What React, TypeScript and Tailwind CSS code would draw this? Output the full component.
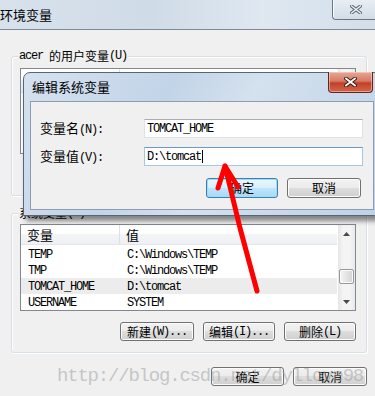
import React from "react";

const MONO = "font-['Liberation_Mono',monospace] text-[12px] tracking-[-1.2px]";

function Mono({ children }: { children: React.ReactNode }) {
  return <span className={MONO}>{children}</span>;
}

function Btn({
  className,
  children,
  focused,
}: {
  className: string;
  children: React.ReactNode;
  focused?: boolean;
}) {
  return (
    <div
      className={`${className} flex items-center justify-center rounded-[3px] border leading-[14px] ${
        focused
          ? "border-[#3c7fb1] bg-[linear-gradient(#eaf6fd_0%,#d9f0fc_50%,#bee6fd_50%,#a7d9f5_100%)] shadow-[inset_0_0_0_1px_#9fdcf8]"
          : "border-[#707070] bg-[linear-gradient(#f2f2f2_0%,#ebebeb_50%,#dddddd_50%,#cfcfcf_100%)] shadow-[inset_0_0_0_1px_#fcfcfc]"
      }`}
    >
      {children}
    </div>
  );
}

function Tri({ up }: { up?: boolean }) {
  return (
    <svg width="7" height="4" viewBox="0 0 7 4">
      {up ? <path d="M3.5 0 L7 4 L0 4 Z" fill="#4a4a4a" /> : <path d="M0 0 L7 0 L3.5 4 Z" fill="#4a4a4a" />}
    </svg>
  );
}

function Scrollbar() {
  return (
    <div className="w-[17px] flex flex-col bg-[linear-gradient(90deg,#e6e6e6,#f4f4f4_30%,#f4f4f4_70%,#e9e9e9)]">
      <div className="h-[17px] flex items-center justify-center">
        <Tri up />
      </div>
      <div className="flex-1 flex flex-col pt-[27px]">
        <div className="mx-[1px] h-[15px] rounded-[2px] border border-[#979797] bg-[linear-gradient(90deg,#f6f6f6,#e4e4e4_50%,#d3d3d3)] shadow-[inset_0_0_0_1px_#fafafa]" />
      </div>
      <div className="h-[17px] flex items-center justify-center">
        <Tri />
      </div>
    </div>
  );
}

type Row = { name: string; value: string; hl?: boolean };

function ListView({ rows, height, headers }: { rows: Row[]; height: string; headers?: boolean }) {
  return (
    <div className={`${height} flex border border-[#828790] bg-white overflow-hidden`}>
      <div className="flex-1 flex flex-col min-w-0 pr-[1px]">
        <div className="h-[24px] flex border-b border-[#e2e5e9] bg-[linear-gradient(#ffffff_0%,#ffffff_50%,#f3f4f6_50%,#eef0f3_100%)]">
          <div className="w-[99px] pl-[6px] flex items-center border-r border-[#dde1e6] text-[13px]">
            {headers ? "变量" : null}
          </div>
          <div className="pl-[6px] flex items-center text-[13px]">{headers ? "值" : null}</div>
        </div>
        <div className="pt-[1px] flex flex-col">
          {rows.map((r) => (
            <div key={r.name} className={`h-[16px] flex items-center ${r.hl ? "bg-[#ececec]" : ""}`}>
              <div className="w-[99px] pl-[7px]">
                <Mono>{r.name}</Mono>
              </div>
              <div className="pl-[7px]">
                <Mono>{r.value}</Mono>
              </div>
            </div>
          ))}
        </div>
      </div>
      <Scrollbar />
    </div>
  );
}

function Group({
  label,
  className,
  children,
}: {
  label: React.ReactNode;
  className: string;
  children: React.ReactNode;
}) {
  return (
    <div
      className={`relative rounded-[3px] border border-[#d5dfe5] shadow-[inset_1px_1px_0_#ffffff,1px_1px_0_#ffffff] ${className}`}
    >
      <div className="absolute left-[6px] top-[-9px] px-[1px] bg-[#f0f0f0] leading-[16px] flex items-center">
        {label}
      </div>
      {children}
    </div>
  );
}

export default function App() {
  return (
    <div className="relative w-[375px] h-[396px] overflow-hidden bg-[#f0f0f0] font-['Noto_Sans_CJK_SC',sans-serif] text-[12px] leading-[16px] text-black">
      {/* Title bar */}
      <div className="h-[30px] flex items-start border-b border-[#7d8a98] bg-[linear-gradient(90deg,#d8e2ec,#cfdbe7_40%,#dfe8f1_70%,#d3dee9)]">
        <div className="h-[29px] flex items-center text-[13px]">环境变量</div>
        <div className="ml-auto -mr-[3px] w-[46px] h-[20px] rounded-bl-[4px] border-l border-b border-[#6b7684] bg-[linear-gradient(#e8eef4,#d3dce6)] shadow-[inset_1px_0_0_#f7fafc] flex items-center justify-center">
          <svg width="12" height="9" viewBox="0 0 12 9">
            <path d="M1.5 1 L10.5 8 M10.5 1 L1.5 8" stroke="#5d6875" strokeWidth="3.4" strokeLinecap="square" />
            <path d="M1.5 1 L10.5 8 M10.5 1 L1.5 8" stroke="#eef2f6" strokeWidth="1.4" strokeLinecap="square" />
          </svg>
        </div>
      </div>

      {/* Body */}
      <div className="flex flex-col pl-[11px] pr-[8px] pt-[26px]">
        <Group
          className="h-[140px] pt-[11px] pl-[8px] pr-[10px]"
          label={
            <>
              <Mono>acer</Mono>
              <span className="ml-[6px]">的用户变量</span>
              <Mono>(U)</Mono>
            </>
          }
        >
          <ListView height="h-[86px]" rows={[]} />
        </Group>

        <Group
          className="mt-[17px] h-[140px] pt-[10px] pl-[8px] pr-[10px] flex flex-col"
          label={
            <>
              <span>系统变量</span>
              <Mono>(S)</Mono>
            </>
          }
        >
          <ListView
            headers
            height="h-[87px]"
            rows={[
              { name: "TEMP", value: "C:\\Windows\\TEMP" },
              { name: "TMP", value: "C:\\Windows\\TEMP" },
              { name: "TOMCAT_HOME", value: "D:\\tomcat", hl: true },
              { name: "USERNAME", value: "SYSTEM" },
            ]}
          />
          <div className="mt-[11px] flex justify-end gap-[9px]">
            <Btn className="w-[74px] h-[19px]">
              新建<Mono>(W)...</Mono>
            </Btn>
            <Btn className="w-[72px] h-[19px]">
              编辑<Mono>(I)...</Mono>
            </Btn>
            <Btn className="w-[72px] h-[19px]">
              删除<Mono>(L)</Mono>
            </Btn>
          </div>
        </Group>

        <div className="mt-[14px] flex justify-end gap-[9px]">
          <Btn className="w-[73px] h-[19px]">确定</Btn>
          <Btn className="w-[74px] h-[19px]">取消</Btn>
        </div>
      </div>

      {/* Edit dialog */}
      <div className="absolute left-[23px] top-[72px] w-[358px] h-[144px] rounded-t-[7px] border border-[#55657a] bg-[linear-gradient(120deg,#d5e2ef_0%,#c2d4e8_35%,#d4e1ee_55%,#bed1e6_100%)] px-[6px] pb-[5px] flex flex-col shadow-[3px_5px_5px_rgba(0,0,0,0.45)]">
        <div className="h-[28px] flex items-start">
          <div className="h-[28px] flex items-center pl-[2px] text-[13px]">编辑系统变量</div>
          <div className="ml-auto -mt-px mr-[1px] w-[45px] h-[21px] rounded-b-[4px] border border-t-0 border-[#5e2a20] bg-[linear-gradient(#e6a898_0%,#d77a63_45%,#c2402a_55%,#d5654a_100%)] shadow-[inset_0_0_0_1px_rgba(255,220,210,0.5)] flex items-center justify-center">
            <svg width="13" height="10" viewBox="0 0 13 10">
              <path d="M2 1.5 L11 8.5 M11 1.5 L2 8.5" stroke="#3b1a14" strokeWidth="3.8" strokeLinecap="square" />
              <path d="M2 1.5 L11 8.5 M11 1.5 L2 8.5" stroke="#ffffff" strokeWidth="1.8" strokeLinecap="square" />
            </svg>
          </div>
        </div>
        <div className="flex-1 border border-[#8d9cb0] bg-[#f0f0f0] pt-[17px] pl-[9px] pr-[10px] flex flex-col">
          <div className="h-[19px] flex items-center">
            <div className="w-[104px] text-[13px]">
              变量名<Mono>(N):</Mono>
            </div>
            <div className="w-[219px] h-[19px] border border-[#dde2e8] border-t-[#abadb3] bg-white flex items-center pl-[2px]">
              <Mono>TOMCAT_HOME</Mono>
            </div>
          </div>
          <div className="mt-[9px] h-[19px] flex items-center">
            <div className="w-[104px] text-[13px]">
              变量值<Mono>(V):</Mono>
            </div>
            <div className="w-[219px] h-[19px] border border-[#a6c8e4] border-t-[#6a9cc3] bg-white flex items-center pl-[2px]">
              <Mono>{"D:\\tomcat"}</Mono>
              <div className="ml-[1px] w-px h-[13px] bg-black" />
            </div>
          </div>
          <div className="mt-[12px] mr-[2px] flex justify-end gap-[9px]">
            <Btn focused className="w-[72px] h-[20px]">
              确定
            </Btn>
            <Btn className="w-[74px] h-[20px]">取消</Btn>
          </div>
        </div>
      </div>

      {/* Watermark */}
      <div className="absolute left-[57px] top-[367px] font-['Liberation_Mono',monospace] text-[19px] leading-[19px] tracking-[-1.2px] text-[#9a9a9a]/50 pointer-events-none">
        http://blog.csdn.net/dyllove98
      </div>

      {/* Red arrow */}
      <svg className="absolute left-0 top-0 pointer-events-none" width="375" height="396" viewBox="0 0 375 396">
        <path
          d="M257 291 L240 228 L225 166 M225 166 L218 188 M225 166 L238 187"
          stroke="#ff0000"
          strokeWidth="5"
          strokeLinecap="round"
          strokeLinejoin="round"
          fill="none"
        />
      </svg>
    </div>
  );
}
